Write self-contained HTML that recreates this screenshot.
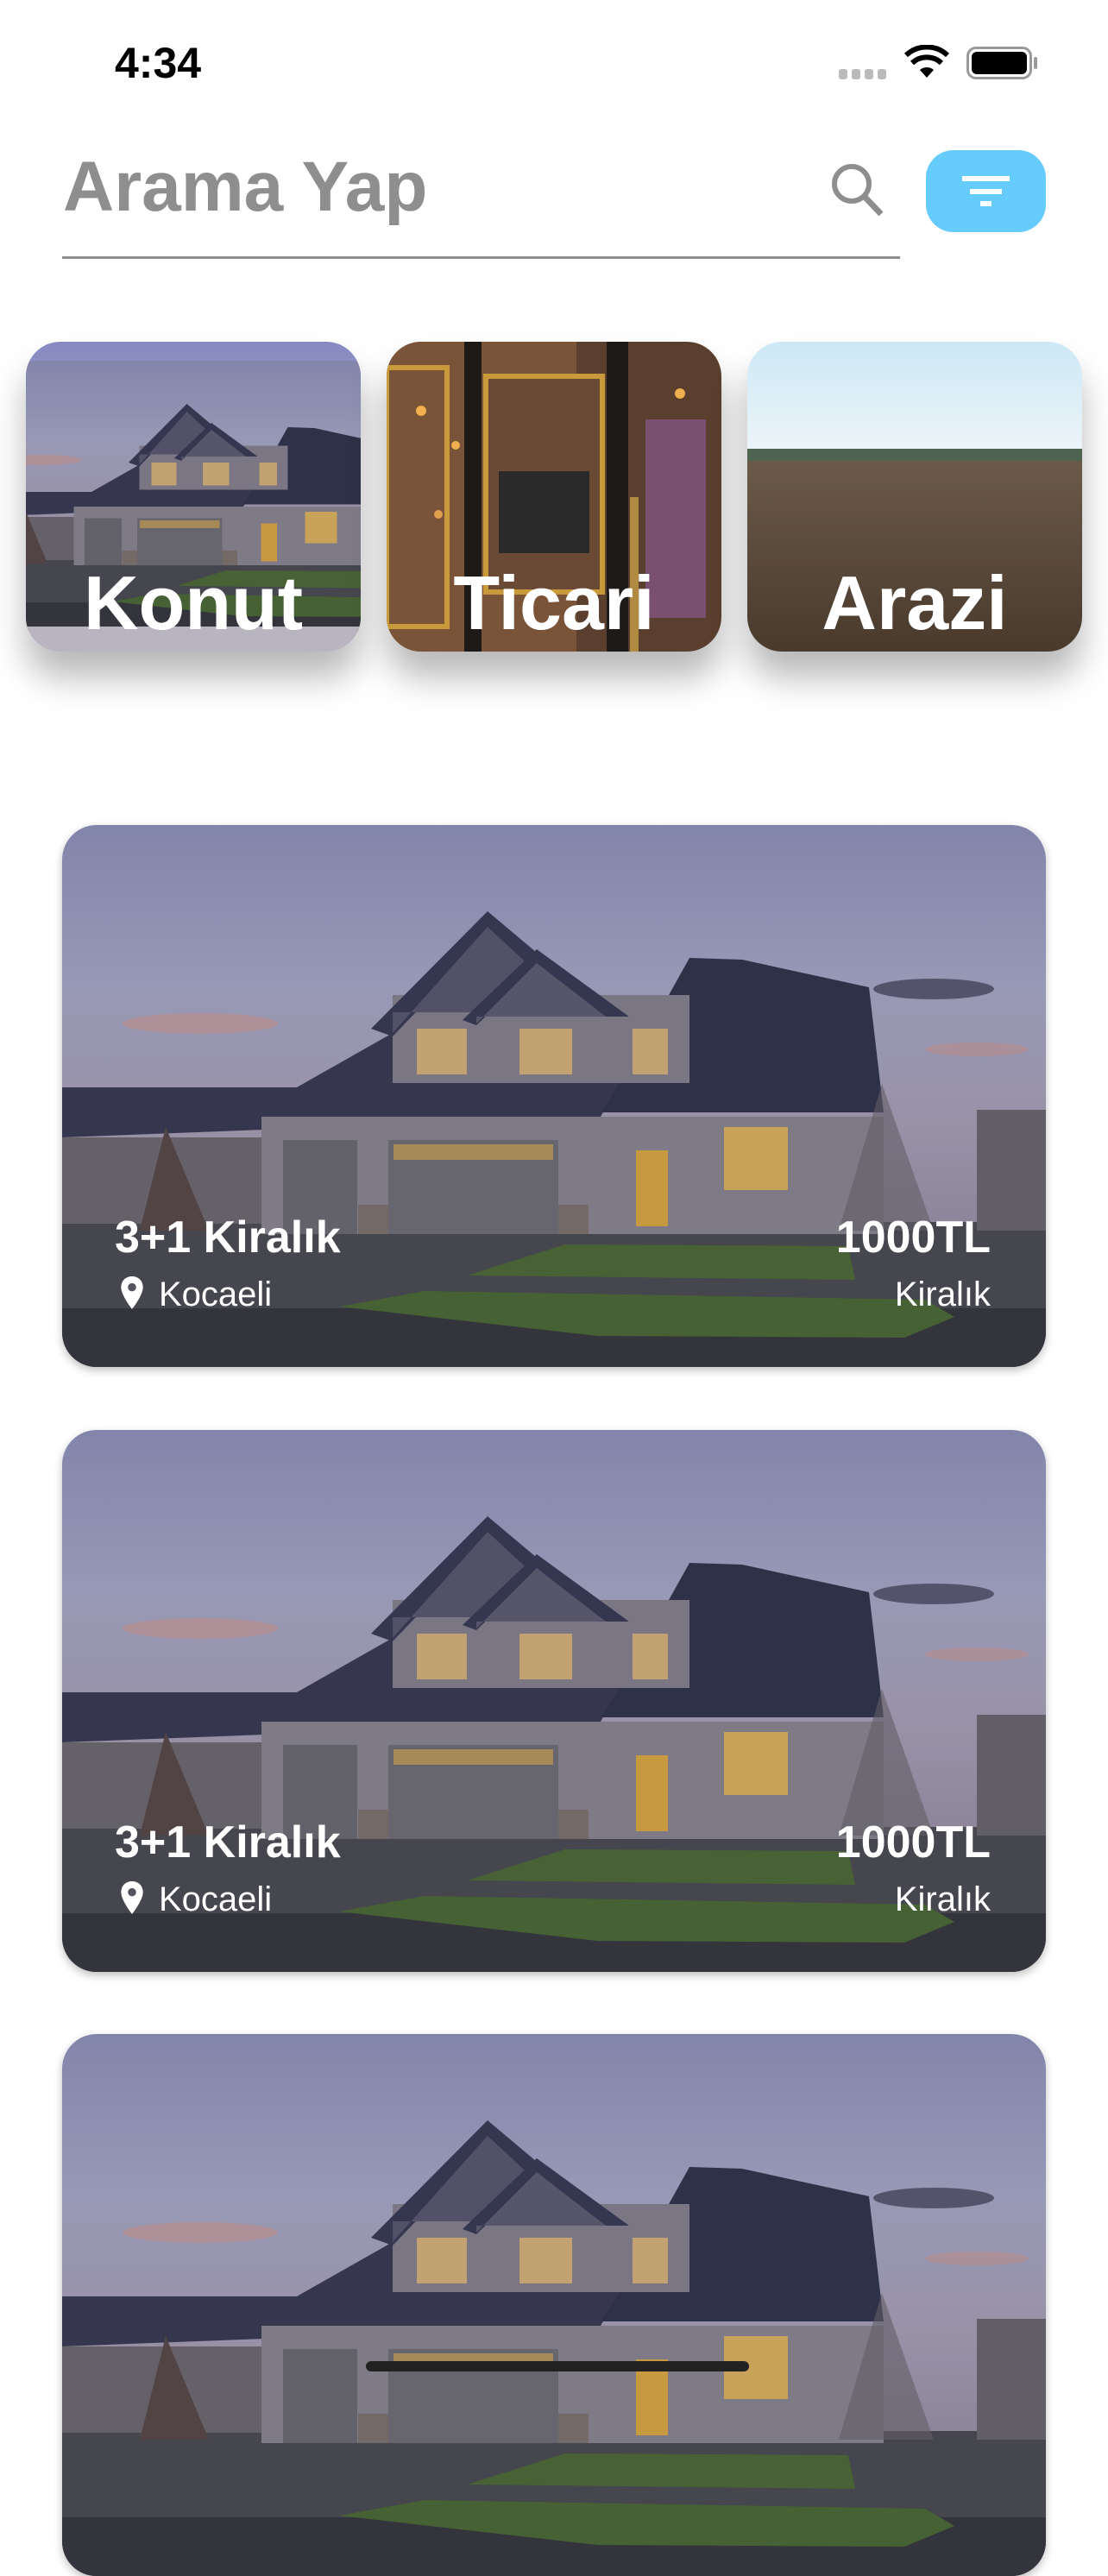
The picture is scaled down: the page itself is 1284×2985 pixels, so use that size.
<!DOCTYPE html>
<html><head><meta charset="utf-8"><style>
*{margin:0;padding:0;box-sizing:border-box}
body{width:1284px;height:2778px;background:#fff;position:relative;overflow:hidden;font-family:"Liberation Sans",sans-serif}
.abs{position:absolute}
.cat{position:absolute;top:396px;width:388px;height:359px;border-radius:40px;overflow:hidden;box-shadow:0 30px 40px rgba(0,0,0,.28)}
.cat span{position:absolute;left:0;right:0;bottom:12px;text-align:center;color:#fff;font-weight:bold;font-size:88px;line-height:1}
.card{position:absolute;left:72px;width:1140px;height:628px;border-radius:40px;overflow:hidden;box-shadow:0 4px 10px rgba(0,0,0,.25)}
.card .t{position:absolute;left:61px;top:448px;color:#fff;font-weight:bold;font-size:52px}
.card .l{position:absolute;left:112px;top:522px;color:#fff;font-size:40px}
.card .p{position:absolute;right:64px;top:448px;color:#fff;font-weight:bold;font-size:52px}
.card .k{position:absolute;right:64px;top:522px;color:#fff;font-size:40px}
</style></head><body>
<div class="abs" style="left:133px;top:44px;font-size:50px;font-weight:bold;color:#000">4:34</div>
<div class="abs" style="left:972px;top:80px;width:60px;height:12px">
<div class="abs" style="left:0;width:10px;height:12px;background:#bbb;border-radius:3px"></div>
<div class="abs" style="left:15px;width:10px;height:12px;background:#bbb;border-radius:3px"></div>
<div class="abs" style="left:30px;width:10px;height:12px;background:#bbb;border-radius:3px"></div>
<div class="abs" style="left:45px;width:10px;height:12px;background:#bbb;border-radius:3px"></div>
</div>
<svg class="abs" style="left:1048px;top:52px" width="52" height="40" viewBox="0 0 52 40"><path d="M26 38 L18 29 A12 12 0 0 1 34 29 Z" fill="#000"/><path d="M9 21 A25 25 0 0 1 43 21" stroke="#000" stroke-width="6" fill="none"/><path d="M2 12 A35 35 0 0 1 50 12" stroke="#000" stroke-width="6" fill="none"/></svg>
<div class="abs" style="left:1120px;top:54px;width:76px;height:38px;border:3px solid #999;border-radius:11px"><div style="position:absolute;left:3px;top:3px;right:3px;bottom:3px;background:#000;border-radius:6px"></div></div>
<div class="abs" style="left:1198px;top:66px;width:4px;height:14px;background:#999;border-radius:2px"></div>

<div class="abs" style="left:73px;top:170px;font-size:82px;font-weight:bold;color:#8e8e8e">Arama Yap</div>
<div class="abs" style="left:72px;top:297px;width:971px;height:3px;background:#8e8e8e"></div>
<svg class="abs" style="left:955px;top:180px" width="80" height="80" viewBox="0 0 80 80"><circle cx="32" cy="33" r="20" stroke="#8e8e8e" stroke-width="6" fill="none"/><path d="M46 47 L66 68" stroke="#8e8e8e" stroke-width="7"/></svg>
<div class="abs" style="left:1073px;top:174px;width:139px;height:95px;border-radius:32px;background:#66ccfd">
<div class="abs" style="left:42px;top:30px;width:55px;height:6px;background:#fff"></div>
<div class="abs" style="left:51px;top:45px;width:37px;height:6px;background:#fff"></div>
<div class="abs" style="left:63px;top:59px;width:13px;height:6px;background:#fff"></div>
</div>

<svg width="0" height="0" style="position:absolute"><defs>
<linearGradient id="hs" x1="0" y1="0" x2="0" y2="1"><stop offset="0" stop-color="#8e91b9"/><stop offset=".3" stop-color="#a5a6c6"/><stop offset=".55" stop-color="#a69fb6"/><stop offset="1" stop-color="#8a7f94"/></linearGradient>
<g id="house">
<rect width="1140" height="628" fill="url(#hs)"/>
<ellipse cx="160" cy="230" rx="90" ry="12" fill="#c79a98" opacity=".7"/>
<ellipse cx="1010" cy="190" rx="70" ry="12" fill="#4a4860" opacity=".8"/>
<ellipse cx="1060" cy="260" rx="60" ry="8" fill="#c99a98" opacity=".6"/>
<rect y="460" width="1140" height="168" fill="#4b4c55"/>
<rect y="560" width="1140" height="68" fill="#393a42"/>
<polygon points="0,304 272,304 383,241 649,294 624,338 0,362" fill="#3b3c55"/>
<polygon points="727,154 788,156 935,188 952,333 624,333 649,294" fill="#34364f"/>
<rect x="0" y="362" width="231" height="100" fill="#6e6a72"/>
<rect x="1060" y="330" width="80" height="140" fill="#6a6670"/>
<rect x="383" y="197" width="344" height="102" fill="#85818f"/>
<polygon points="358,236 493,100 632,217 600,217 493,130 383,245" fill="#3a3b56"/>
<polygon points="383,241 493,118 600,217 383,217" fill="#5a5870"/>
<polygon points="464,226 550,144 657,222 630,222 550,165 480,232" fill="#3a3b56"/>
<polygon points="480,230 550,160 630,222 480,222" fill="#5f5d72"/>
<rect x="231" y="338" width="721" height="136" fill="#8a8692"/>
<rect x="256" y="365" width="86" height="109" fill="#6c6a72"/>
<rect x="378" y="365" width="197" height="109" fill="#706e78"/>
<rect x="384" y="370" width="185" height="18" fill="#b59660"/>
<rect x="411" y="236" width="58" height="53" fill="#d2b07a"/>
<rect x="530" y="236" width="61" height="53" fill="#d2b07a"/>
<rect x="661" y="236" width="41" height="53" fill="#d2b07a"/>
<rect x="767" y="350" width="74" height="73" fill="#d8b060"/>
<rect x="665" y="377" width="37" height="88" fill="#d8a848"/>
<rect x="343" y="440" width="35" height="34" fill="#7d7470"/>
<rect x="575" y="440" width="35" height="34" fill="#7d7470"/>
<polygon points="469,522 583,486 911,488 919,527" fill="#4f6a3a"/>
<polygon points="321,558 420,540 1000,550 1034,570 976,594 620,592" fill="#4c6a38"/>
<polygon points="90,470 120,350 170,470" fill="#5a4a4a"/>
<polygon points="900,470 950,300 1010,470" fill="#6a6670" opacity=".6"/>
<rect width="1140" height="628" fill="#000" opacity=".08"/>
</g></defs></svg>

<div class="cat" style="left:30px">
<svg width="388" height="359" viewBox="0 0 388 359"><defs><linearGradient id="s1" x1="0" y1="0" x2="0" y2="1"><stop offset="0" stop-color="#8688c0"/><stop offset=".5" stop-color="#bdb8d8"/><stop offset=".7" stop-color="#d8b0b0"/></linearGradient></defs>
<rect width="388" height="359" fill="url(#s1)"/>
<g transform="translate(-60,22) scale(0.5)"><use href="#house"/></g>
<rect y="330" width="388" height="29" fill="#b8b4c0"/></svg>
<span>Konut</span></div>
<div class="cat" style="left:448px">
<svg width="388" height="359" viewBox="0 0 388 359"><rect width="388" height="359" fill="#5a3e2e"/><rect x="0" width="220" height="359" fill="#7a5438"/>
<circle cx="40" cy="80" r="6" fill="#f0b050"/><circle cx="80" cy="120" r="5" fill="#f0b050"/><circle cx="170" cy="90" r="6" fill="#f0c060"/><circle cx="200" cy="150" r="5" fill="#f0b050"/><circle cx="60" cy="200" r="5" fill="#e0a050"/><circle cx="340" cy="60" r="6" fill="#f0b050"/>
<rect x="0" y="30" width="70" height="300" fill="none" stroke="#c99a3a" stroke-width="6"/>
<rect x="90" y="0" width="20" height="359" fill="#1e1a18"/><rect x="255" y="0" width="25" height="359" fill="#1e1a18"/>
<rect x="115" y="40" width="135" height="250" fill="#6a4a34" stroke="#c99a3a" stroke-width="6"/>
<rect x="130" y="150" width="105" height="95" fill="#2a2a2a"/>
<rect x="300" y="90" width="70" height="230" fill="#7a5070"/>
<rect x="282" y="180" width="10" height="179" fill="#b08a40"/></svg>
<span>Ticari</span></div>
<div class="cat" style="left:866px">
<svg width="388" height="359" viewBox="0 0 388 359"><defs><linearGradient id="s2" x1="0" y1="0" x2="0" y2="1"><stop offset="0" stop-color="#cce8f6"/><stop offset="1" stop-color="#f0f6f8"/></linearGradient><linearGradient id="g2" x1="0" y1="0" x2="0" y2="1"><stop offset="0" stop-color="#6b5a4a"/><stop offset="1" stop-color="#4a3a2c"/></linearGradient></defs><rect width="388" height="140" fill="url(#s2)"/><rect y="124" width="388" height="16" fill="#4e6450"/><rect y="138" width="388" height="221" fill="url(#g2)"/></svg>
<span>Arazi</span></div>

<div class="card" style="top:956px"><svg width="1140" height="628"><use href="#house"/></svg>
<div class="t">3+1 Kiralık</div>
<svg class="abs" style="left:68px;top:523px" width="26" height="38" viewBox="0 0 24 36"><path d="M12 0C5 0 0 5 0 12c0 9 12 24 12 24s12-15 12-24C24 5 19 0 12 0z" fill="#fff"/><circle cx="12" cy="12" r="4.5" fill="#55535e"/></svg>
<div class="l">Kocaeli</div><div class="p">1000TL</div><div class="k">Kiralık</div></div>

<div class="card" style="top:1657px"><svg width="1140" height="628"><use href="#house"/></svg>
<div class="t">3+1 Kiralık</div>
<svg class="abs" style="left:68px;top:523px" width="26" height="38" viewBox="0 0 24 36"><path d="M12 0C5 0 0 5 0 12c0 9 12 24 12 24s12-15 12-24C24 5 19 0 12 0z" fill="#fff"/><circle cx="12" cy="12" r="4.5" fill="#55535e"/></svg>
<div class="l">Kocaeli</div><div class="p">1000TL</div><div class="k">Kiralık</div></div>

<div class="card" style="top:2357px"><svg width="1140" height="628"><use href="#house"/></svg></div>

<div class="abs" style="left:424px;top:2736px;width:444px;height:12px;border-radius:6px;background:#222"></div>
</body></html>
